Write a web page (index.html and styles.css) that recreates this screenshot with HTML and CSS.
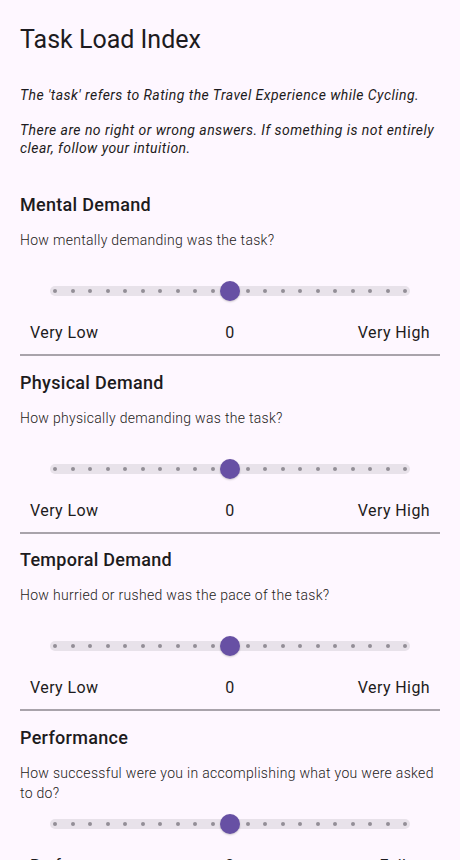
FILE: index.html
```html
<!DOCTYPE html>
<html>
<head>
<meta charset="utf-8">
<link rel="stylesheet" href="styles.css">
</head>
<body>
<div class="page">
  <h1 class="title">Task Load Index</h1>
  <p class="intro">The 'task' refers to Rating the Travel Experience while Cycling.<br><br>There are no right or wrong answers. If something is not entirely clear, follow your intuition.</p>

  <section class="item">
    <h2 class="item-title">Mental Demand</h2>
    <p class="question">How mentally demanding was the task?</p>
    <div class="slider">
      <div class="track">
        <span class="dot"></span><span class="dot"></span><span class="dot"></span><span class="dot"></span><span class="dot"></span><span class="dot"></span><span class="dot"></span><span class="dot"></span><span class="dot"></span><span class="dot"></span><span class="dot"></span><span class="dot"></span><span class="dot"></span><span class="dot"></span><span class="dot"></span><span class="dot"></span><span class="dot"></span><span class="dot"></span><span class="dot"></span><span class="dot"></span><span class="dot"></span>
        <span class="thumb"></span>
      </div>
    </div>
    <div class="labels"><span class="lo">Very Low</span><span class="val">0</span><span class="hi">Very High</span></div>
    <hr class="divider">
  </section>

  <section class="item">
    <h2 class="item-title">Physical Demand</h2>
    <p class="question">How physically demanding was the task?</p>
    <div class="slider">
      <div class="track">
        <span class="dot"></span><span class="dot"></span><span class="dot"></span><span class="dot"></span><span class="dot"></span><span class="dot"></span><span class="dot"></span><span class="dot"></span><span class="dot"></span><span class="dot"></span><span class="dot"></span><span class="dot"></span><span class="dot"></span><span class="dot"></span><span class="dot"></span><span class="dot"></span><span class="dot"></span><span class="dot"></span><span class="dot"></span><span class="dot"></span><span class="dot"></span>
        <span class="thumb"></span>
      </div>
    </div>
    <div class="labels"><span class="lo">Very Low</span><span class="val">0</span><span class="hi">Very High</span></div>
    <hr class="divider">
  </section>

  <section class="item">
    <h2 class="item-title">Temporal Demand</h2>
    <p class="question">How hurried or rushed was the pace of the task?</p>
    <div class="slider">
      <div class="track">
        <span class="dot"></span><span class="dot"></span><span class="dot"></span><span class="dot"></span><span class="dot"></span><span class="dot"></span><span class="dot"></span><span class="dot"></span><span class="dot"></span><span class="dot"></span><span class="dot"></span><span class="dot"></span><span class="dot"></span><span class="dot"></span><span class="dot"></span><span class="dot"></span><span class="dot"></span><span class="dot"></span><span class="dot"></span><span class="dot"></span><span class="dot"></span>
        <span class="thumb"></span>
      </div>
    </div>
    <div class="labels"><span class="lo">Very Low</span><span class="val">0</span><span class="hi">Very High</span></div>
    <hr class="divider">
  </section>

  <section class="item">
    <h2 class="item-title">Performance</h2>
    <p class="question">How successful were you in accomplishing what you were asked to do?</p>
    <div class="slider">
      <div class="track">
        <span class="dot"></span><span class="dot"></span><span class="dot"></span><span class="dot"></span><span class="dot"></span><span class="dot"></span><span class="dot"></span><span class="dot"></span><span class="dot"></span><span class="dot"></span><span class="dot"></span><span class="dot"></span><span class="dot"></span><span class="dot"></span><span class="dot"></span><span class="dot"></span><span class="dot"></span><span class="dot"></span><span class="dot"></span><span class="dot"></span><span class="dot"></span>
        <span class="thumb"></span>
      </div>
    </div>
    <div class="labels"><span class="lo">Perfect</span><span class="val">0</span><span class="hi">Failure</span></div>
    <hr class="divider">
  </section>
</div>
</body>
</html>
```

FILE: styles.css
```css
html, body {
  margin: 0;
  padding: 0;
  background: #fef7ff;
}
body {
  font-family: Roboto, "Noto Sans", sans-serif;
  color: #1d1b20;
  overflow: hidden;
}
.page {
  padding: 24px 20px 0;
}
.title {
  margin: 0;
  font-size: 25px;
  font-weight: 400;
  line-height: 32px;
}
.intro {
  margin: 31px 0 0;
  font-size: 14px;
  font-style: italic;
  line-height: 17.5px;
  letter-spacing: 0.45px;
  color: #1d1b20;
}
.item:first-of-type {
  margin-top: 36px;
}
.item-title {
  margin: 0;
  font-size: 18px;
  font-weight: 500;
  line-height: 24px;
  letter-spacing: 0.3px;
}
.question {
  margin: 13px 0 0;
  height: 40px;
  font-size: 14px;
  line-height: 20px;
  letter-spacing: 0.3px;
  font-weight: 300;
  color: #1d1b20;
}
.slider {
  height: 42px;
  display: flex;
  align-items: center;
  padding: 0 30px;
}
.track {
  position: relative;
  flex: 1;
  height: 10px;
  border-radius: 5px;
  background: #e8e2ea;
  display: flex;
  align-items: center;
  justify-content: space-between;
  padding: 0 3px;
}
.dot {
  width: 4px;
  height: 4px;
  border-radius: 50%;
  background: #938e97;
}
.thumb {
  position: absolute;
  left: 50%;
  top: 50%;
  width: 20px;
  height: 20px;
  margin: -10px 0 0 -10px;
  border-radius: 50%;
  background: #6750a4;
  box-shadow: 0 1px 2px rgba(0,0,0,0.2);
}
.labels {
  margin-top: 10px;
  display: grid;
  grid-template-columns: 1fr auto 1fr;
  padding: 0 10px;
  font-size: 16px;
  line-height: 22px;
  letter-spacing: 0.4px;
}
.lo { text-align: left; }
.hi { text-align: right; }
.divider {
  margin: 10px 0 14.67px;
  border: 0;
  height: 2px;
  background: #a9a3ab;
}
```
